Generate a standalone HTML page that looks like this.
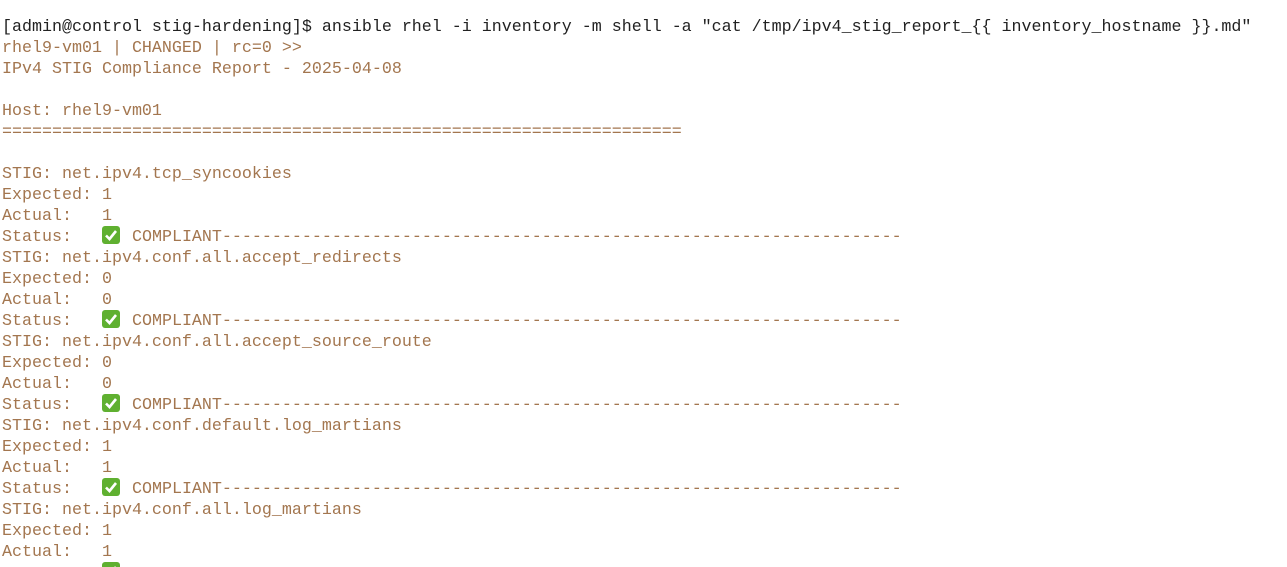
<!DOCTYPE html>
<html><head><meta charset="utf-8"><style>
html,body{margin:0;background:#fff;width:1287px;height:567px;overflow:hidden}
pre{margin:0;padding:17px 0 0 2px;font-family:"Liberation Mono","DejaVu Sans Mono",monospace;font-size:16.67px;line-height:21px;color:#a3764f}
.k{color:#222}
.e{display:inline-block;width:20px;height:0;position:relative;vertical-align:baseline}
.e svg{position:absolute;left:0;top:-15px}
</style></head><body><pre><span class="k">[admin@control stig-hardening]$ ansible rhel -i inventory -m shell -a "cat /tmp/ipv4_stig_report_{{ inventory_hostname }}.md"</span>
rhel9-vm01 | CHANGED | rc=0 &gt;&gt;
IPv4 STIG Compliance Report - 2025-04-08

Host: rhel9-vm01
====================================================================

STIG: net.ipv4.tcp_syncookies
Expected: 1
Actual:   1
Status:   <span class="e"><svg width="18" height="18"><rect width="18" height="18" rx="3" fill="#5fb030"/><path d="M4 9.5l3.5 3.5 6.5-8" stroke="#fff" stroke-width="2.6" fill="none"/></svg></span> COMPLIANT--------------------------------------------------------------------
STIG: net.ipv4.conf.all.accept_redirects
Expected: 0
Actual:   0
Status:   <span class="e"><svg width="18" height="18"><rect width="18" height="18" rx="3" fill="#5fb030"/><path d="M4 9.5l3.5 3.5 6.5-8" stroke="#fff" stroke-width="2.6" fill="none"/></svg></span> COMPLIANT--------------------------------------------------------------------
STIG: net.ipv4.conf.all.accept_source_route
Expected: 0
Actual:   0
Status:   <span class="e"><svg width="18" height="18"><rect width="18" height="18" rx="3" fill="#5fb030"/><path d="M4 9.5l3.5 3.5 6.5-8" stroke="#fff" stroke-width="2.6" fill="none"/></svg></span> COMPLIANT--------------------------------------------------------------------
STIG: net.ipv4.conf.default.log_martians
Expected: 1
Actual:   1
Status:   <span class="e"><svg width="18" height="18"><rect width="18" height="18" rx="3" fill="#5fb030"/><path d="M4 9.5l3.5 3.5 6.5-8" stroke="#fff" stroke-width="2.6" fill="none"/></svg></span> COMPLIANT--------------------------------------------------------------------
STIG: net.ipv4.conf.all.log_martians
Expected: 1
Actual:   1
          <span class="e"><svg width="18" height="18"><rect width="18" height="18" rx="3" fill="#5fb030"/><path d="M4 9.5l3.5 3.5 6.5-8" stroke="#fff" stroke-width="2.6" fill="none"/></svg></span>
</pre></body></html>
